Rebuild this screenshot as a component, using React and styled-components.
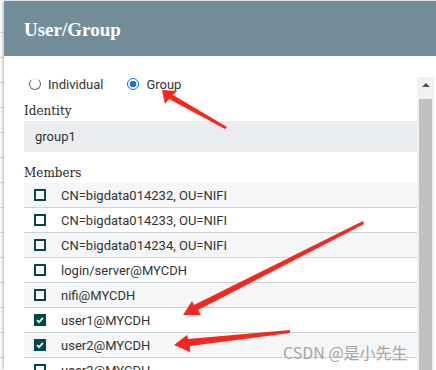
import styled, { createGlobalStyle } from "styled-components";

const GlobalStyle = createGlobalStyle`
  html, body {
    margin: 0;
    padding: 0;
    overflow: hidden;
  }
  body {
    width: 436px;
    height: 370px;
    background: repeating-linear-gradient(to bottom, #fbfbfb 0 24px, #d9d9d9 24px 25px);
    background-position: 0 8px;
    font-family: Roboto, "Noto Sans", sans-serif;
  }
`;

const members = [
  { name: "CN=bigdata014232, OU=NIFI", checked: false },
  { name: "CN=bigdata014233, OU=NIFI", checked: false },
  { name: "CN=bigdata014234, OU=NIFI", checked: false },
  { name: "login/server@MYCDH", checked: false },
  { name: "nifi@MYCDH", checked: false },
  { name: "user1@MYCDH", checked: true },
  { name: "user2@MYCDH", checked: true },
  { name: "user3@MYCDH", checked: false },
];

const App = () => {
  return (
    <Page>
      <GlobalStyle />
      <Dialog>
        <Header>
          <Title>User/Group</Title>
        </Header>
        <Body>
          <Content>
            <RadioRow>
              <RadioOption>
                <Radio />
                <RadioLabel>Individual</RadioLabel>
              </RadioOption>
              <RadioOption>
                <Radio checked />
                <RadioLabel>Group</RadioLabel>
              </RadioOption>
            </RadioRow>
            <FieldLabel>Identity</FieldLabel>
            <Input>group1</Input>
            <FieldLabel $top={14}>Members</FieldLabel>
            <List>
              {members.map((m, i) => (
                <Row key={m.name} $odd={i % 2 === 0}>
                  <Checkbox $checked={m.checked}>
                    {m.checked && (
                      <svg width="8" height="8" viewBox="0 0 8 8">
                        <path d="M1 4.2 L3.1 6.2 L7 1.8" fill="none" stroke="#fff" strokeWidth="1.8" />
                      </svg>
                    )}
                  </Checkbox>
                  <RowText>{m.name}</RowText>
                </Row>
              ))}
            </List>
          </Content>
          <ScrollBar>
            <ScrollArrow />
            <ScrollThumb />
          </ScrollBar>
        </Body>
      </Dialog>
      <Overlay width="436" height="370" viewBox="0 0 436 370">
        <polygon fill="#f8261c" points="162,90 177,91 173,95 227,127 225,129 169,99 165,104" />
        <polygon fill="#f8261c" points="183,315 192,301 194,305 363,221 364,224 198,310 201,315" />
        <polygon fill="#f8261c" points="174,345 187,335 188,339 290,330 290,333 190,346 190,352" />
      </Overlay>
      <Watermark>CSDN @是小先生</Watermark>
    </Page>
  );
};

export default App;

const Page = styled.div`
  position: relative;
  width: 436px;
  height: 370px;
  padding: 1px 0 0 4px;
  box-sizing: border-box;
  overflow: hidden;
`;

const Dialog = styled.div`
  width: 440px;
  height: 369px;
  background: #fff;
  box-shadow: -1px 0 3px rgba(0, 0, 0, 0.25);
  display: flex;
  flex-direction: column;
`;

const Header = styled.div`
  height: 55px;
  background: #728c98;
  display: flex;
  align-items: center;
  padding-left: 20px;
  flex-shrink: 0;
`;

const Title = styled.div`
  font-family: "Liberation Serif", serif;
  font-weight: bold;
  font-size: 19px;
  color: #fff;
  margin-top: 2px;
`;

const Body = styled.div`
  display: flex;
  padding: 21px 0 0 20px;
  flex: 1;
  min-height: 0;
`;

const Content = styled.div`
  width: 393px;
  display: flex;
  flex-direction: column;
  overflow: hidden;
  & > * {
    flex-shrink: 0;
  }
`;

const RadioRow = styled.div`
  display: flex;
  align-items: center;
  height: 14px;
  padding-left: 5px;
  gap: 24px;
`;

const RadioOption = styled.div`
  display: flex;
  align-items: center;
  gap: 7px;
`;

const Radio = styled.span`
  width: 12px;
  height: 12px;
  border-radius: 50%;
  box-sizing: border-box;
  border: ${(p) => (p.checked ? "1.5px solid #0d6efd" : "1px solid #6b6b6b")};
  border-top-color: ${(p) => (p.checked ? "#0d6efd" : "#e0e0e0")};
  background: ${(p) => (p.checked ? "radial-gradient(circle, #0d6efd 0 3px, #fff 3.4px)" : "#fff")};
`;

const RadioLabel = styled.span`
  font-size: 13px;
  color: #333;
`;

const FieldLabel = styled.div`
  font-family: "DejaVu Serif", serif;
  font-size: 12px;
  color: #262626;
  margin-top: ${(p) => p.$top || 13}px;
  height: 15px;
  line-height: 15px;
  margin-bottom: 2px;
`;

const Input = styled.div`
  height: 31px;
  background: #eaedf0;
  padding-left: 11px;
  display: flex;
  align-items: center;
  font-size: 13px;
  color: #333;
`;

const List = styled.div`
  display: flex;
  flex-direction: column;
`;

const Row = styled.div`
  height: 24px;
  border-bottom: 1px solid #c9d4d9;
  background: ${(p) => (p.$odd ? "#f4f6f8" : "#fff")};
  display: flex;
  align-items: center;
  padding-left: 10px;
  flex-shrink: 0;
`;

const Checkbox = styled.span`
  width: 12px;
  height: 12px;
  box-sizing: border-box;
  border: 2px solid #004849;
  background: ${(p) => (p.$checked ? "#004849" : "#fff")};
  display: flex;
  align-items: center;
  justify-content: center;
  margin-right: 15px;
`;

const RowText = styled.span`
  font-size: 13px;
  color: #333;
`;

const ScrollBar = styled.div`
  width: 17px;
  background: #f1f1f1;
  display: flex;
  flex-direction: column;
  align-items: center;
`;

const ScrollArrow = styled.div`
  width: 0;
  height: 0;
  border-left: 4px solid transparent;
  border-right: 4px solid transparent;
  border-bottom: 4px solid #505050;
  margin: 6px 0 12px;
`;

const ScrollThumb = styled.div`
  width: 13px;
  flex: 1;
  background: #c1c1c1;
`;

const Overlay = styled.svg`
  position: absolute;
  top: 0;
  left: 0;
  pointer-events: none;
`;

const Watermark = styled.div`
  position: absolute;
  left: 283px;
  top: 340px;
  font-family: "Noto Sans CJK SC", sans-serif;
  font-size: 16px;
  color: #a6a6a6;
  white-space: nowrap;
`;
